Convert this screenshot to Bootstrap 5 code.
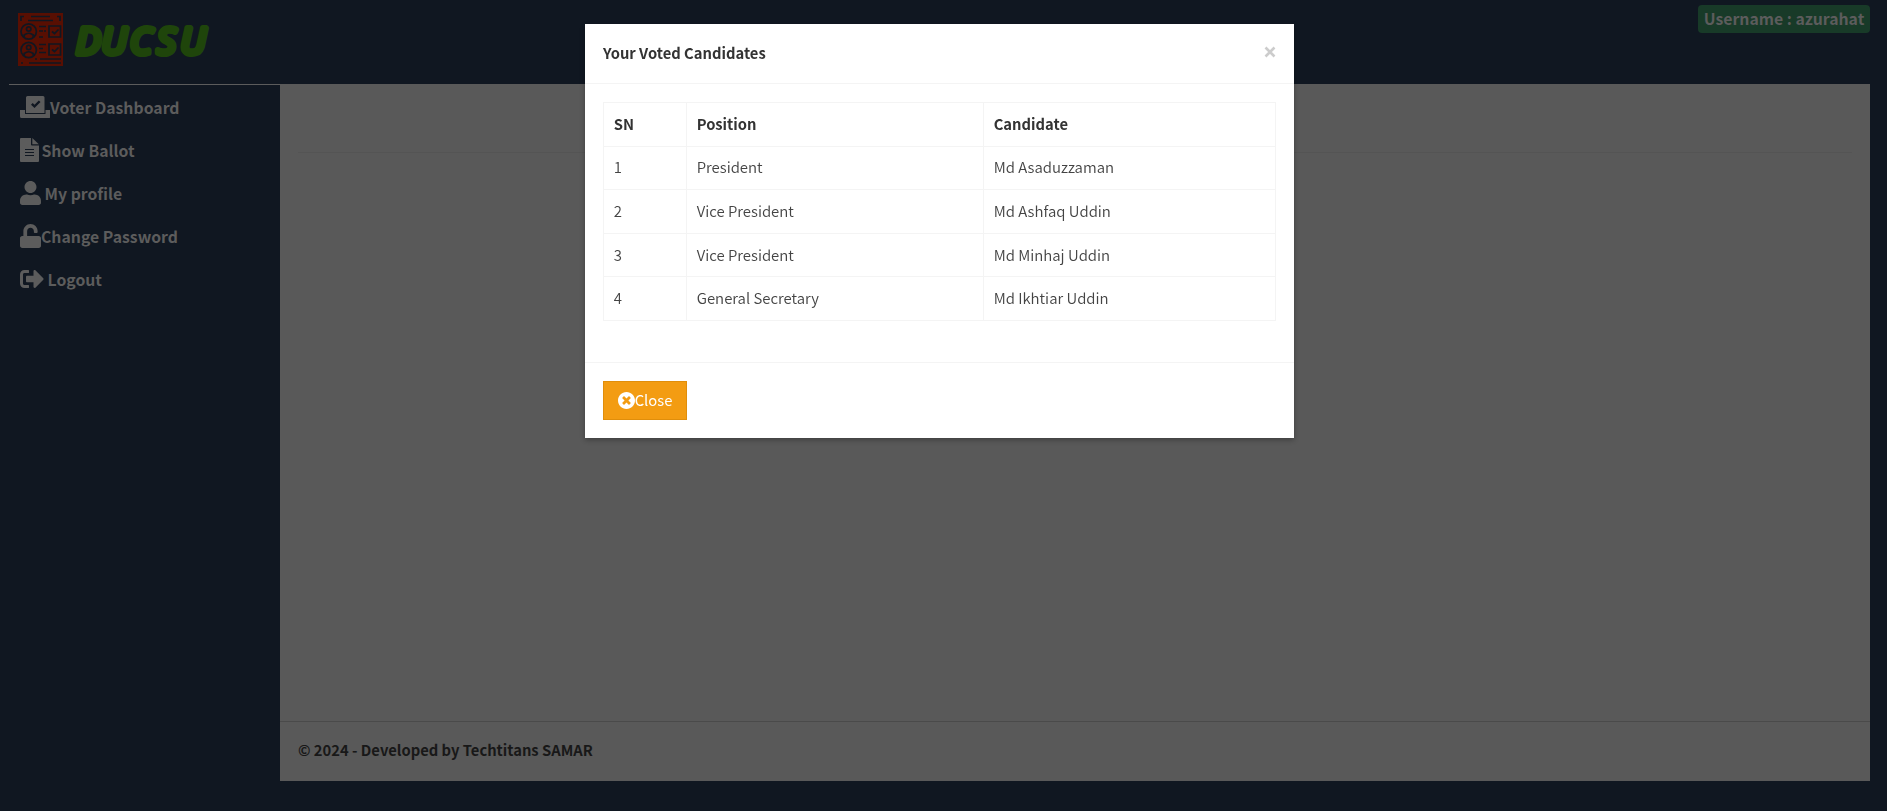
<!DOCTYPE html>
<html lang="en">
<head>
<meta charset="utf-8">
<meta name="viewport" content="width=device-width, initial-scale=1">
<title>DUCSU - Voter Dashboard</title>
<link href="https://cdn.jsdelivr.net/npm/bootstrap@5.3.0/dist/css/bootstrap.min.css" rel="stylesheet">
<style>
body{background:#101721;font-family:"Noto Sans CJK SC","Noto Sans",sans-serif;font-size:14.75px;line-height:24px;color:#333;height:811px;overflow:hidden}
.site-header{height:84px}
.brand{padding:13px 0 0 18px}
.user-tag{background:#183a28;color:#5c5c5c;font-size:15.8px;font-weight:700;height:28px;line-height:27px;width:172px;border-radius:4px;margin:5px 17px 0 0;white-space:nowrap}
.page-row{height:697px;padding-right:17px}
.side{width:280px}
.side ul{margin-left:9px;border-top:1px solid #5c5c5c;padding:1px 0 0 11px}
.side a{height:43px;color:#5c5c5c;font-weight:700;font-size:15.8px;text-decoration:none;white-space:nowrap}
.side svg{fill:#5c5c5c;flex:none}
.side .lift{margin-top:-2px}
.main-pane{background:#595959}
.main-pane .rule{margin:68px 18px 0;border-top:1px solid #545454}
.foot{height:60px;border-top:1px solid #4a4a4a;padding:16px 18px;color:#181818;font-weight:700}
.modal-dialog{width:709px;max-width:709px;margin:24px 0 0 585px}
.modal-content{border:0;border-radius:0;height:414px;box-shadow:0 2px 5px rgba(0,0,0,.3);color:#333}
.modal-header{height:60px;padding:0 18px;border-bottom:1px solid #f4f4f4;border-radius:0}
.modal-title{font-size:14.75px;font-weight:700;line-height:24px;margin-top:-2px}
.modal-body{padding:18px}
.modal-footer{height:76px;padding:0 18px;border-top:1px solid #f4f4f4;border-radius:0}
.modal-footer>*{margin:0}
.vote-table{width:673px;table-layout:fixed;border-collapse:collapse;font-weight:350;color:#333;border-color:#f4f4f4}
.vote-table th,.vote-table td{border:1px solid #f4f4f4;padding:0 9.7px;height:43.6px;line-height:24px;vertical-align:middle}
.vote-table td{padding-bottom:1px;font-size:14.95px;color:#444}
.vote-table th{font-weight:700}
.x-btn{background:none;border:0;padding:0;width:12px;height:12px;line-height:0;margin-top:-3px}
.btn-shut{background:#f39c12;border:1px solid #e08e0b;border-radius:0;color:#fff;width:84px;height:39px;padding:0 0 1px;font-size:14.8px}
.btn-shut:hover{background:#e08e0b;color:#fff}
</style>
</head>
<body>
<header class="site-header d-flex justify-content-between align-items-start">
  <div class="brand d-flex">
    <svg width="45" height="53" viewBox="0 0 45 53" fill="none" stroke="#101721" stroke-width="1.7">
      <path fill="#580f02" stroke="none" d="M0 0h45v53H0z"/>
      <path d="M3 8V3.500h3M42 8V3.500h-3M13 3.500h19M10 7.500h25"/>
      <circle cx="10.700" cy="18.500" r="7.700"/><circle cx="10.700" cy="16" r="2.200"/><path d="M6.200 24v-2q4.500-3.500 9 0v2"/>
      <circle cx="10.700" cy="37" r="7.700"/><circle cx="10.700" cy="34.500" r="2.200"/><path d="M6.200 42.500v-2q4.500-3.500 9 0v2"/>
      <path d="M31 13h11.500v11H31zM31 31h11.500v11H31zM34 18.500l2.500 2 4-4M34 36.500l2.500 2 4-4"/>
      <path d="M21 13.500h7M21 18h4M26 18h2M21 24h4M21 31.500h7M21 35.500h4M21 39.500h7M17 46h2M22 46h21M3 50h2M11 50h32"/>
    </svg>
    <svg width="160" height="60" viewBox="0 0 160 60">
      <text x="13 38.500 67 94 117.500" y="40.500" font-family="Open Sans" font-style="italic" font-weight="400" font-size="37" fill="#1f450b" stroke="#1f450b" stroke-width="6" stroke-linejoin="round" stroke-linecap="round">DUCSU</text>
    </svg>
  </div>
  <div class="user-tag text-center">Username : azurahat</div>
</header>
<div class="page-row d-flex">
  <nav class="side">
    <ul class="list-unstyled mb-0">
      <li><a href="#" class="d-flex align-items-center"><svg class="lift" width="30" height="24" viewBox="0 0 30 24"><path fill-rule="evenodd" d="M7.500 1h15.500q1.500 0 1.500 1.500V18H6V2.500Q6 1 7.500 1zM11 9.800l3.500 3.300 6-6-1.700-1.600-4.300 4.300-1.800-1.700z"/><path d="M0 15h5v4h20.500v-4H30.500v6.500q0 1.500-1.500 1.500H1.500Q0 23 0 21.500z"/></svg>Voter Dashboard</a></li>
      <li><a href="#" class="d-flex align-items-center"><svg class="lift" width="21.500" height="24" viewBox="0 0 21.500 24"><path fill-rule="evenodd" d="M1 0h10v6.500q0 1 1 1h7V23q0 1-1 1H1q-1 0-1-1V1q0-1 1-1zM5 11v1h9v-1zm0 3v1h9v-1zm0 3v1h9v-1z"/><path d="M12.300 0l6.500 6.300h-6.500z"/></svg>Show Ballot</a></li>
      <li><a href="#" class="d-flex align-items-center"><svg class="lift" width="24.500" height="24" viewBox="0 0 523 512"><path d="M224 256c70.700 0 128-57.300 128-128S294.700 0 224 0 96 57.300 96 128s57.300 128 128 128zm89.600 32h-16.700c-22.200 10.200-46.900 16-72.900 16s-50.600-5.800-72.900-16h-16.700C60.200 288 0 348.200 0 422.400V464c0 26.500 21.500 48 48 48h352c26.500 0 48-21.500 48-48v-41.600c0-74.200-60.200-134.400-134.400-134.400z"/></svg>My profile</a></li>
      <li><a href="#" class="d-flex align-items-center"><svg class="lift" width="21" height="24" viewBox="0 0 448 512"><path d="M400 256H152V152.900c0-39.600 31.700-72.500 71.300-72.900 40-.4 72.700 32.100 72.700 72v16c0 13.300 10.700 24 24 24h32c13.300 0 24-10.700 24-24v-16C376 68 307.500-.3 223.500 0 139.500.3 72 69.500 72 153.500V256H48c-26.500 0-48 21.500-48 48v160c0 26.500 21.500 48 48 48h352c26.500 0 48-21.500 48-48V304c0-26.500-21.500-48-48-48z"/></svg>Change Password</a></li>
      <li><a href="#" class="d-flex align-items-center"><svg class="lift" width="27.500" height="24" viewBox="0 0 587 512"><path d="M497 273L329 441c-15 15-41 4.500-41-17v-96H152c-13.300 0-24-10.700-24-24v-96c0-13.300 10.700-24 24-24h136V88c0-21.400 25.900-32 41-17l168 168c9.300 9.400 9.300 24.600 0 34zM192 436v-40c0-6.600-5.400-12-12-12H96c-17.700 0-32-14.300-32-32V160c0-17.700 14.300-32 32-32h84c6.600 0 12-5.400 12-12V76c0-6.600-5.400-12-12-12H96c-53 0-96 43-96 96v192c0 53 43 96 96 96h84c6.600 0 12-5.400 12-12z"/></svg>Logout</a></li>
    </ul>
  </nav>
  <main class="main-pane flex-grow-1 d-flex flex-column">
    <div class="rule"></div>
    <footer class="foot mt-auto">© 2024 - Developed by Techtitans SAMAR</footer>
  </main>
</div>

<div class="modal d-block" tabindex="-1" role="dialog" aria-label="Your Voted Candidates">
  <div class="modal-dialog">
    <div class="modal-content">
      <div class="modal-header d-flex align-items-center justify-content-between">
        <h4 class="modal-title">Your Voted Candidates</h4>
        <button class="x-btn" type="button" aria-label="Close"><svg width="12" height="12" viewBox="0 0 12 12" stroke="#ccc" stroke-width="2.600"><path d="M1.500 1.500l9 9M10.500 1.500l-9 9"/></svg></button>
      </div>
      <div class="modal-body">
        <table class="vote-table">
          <colgroup><col style="width:83px"><col style="width:297px"><col></colgroup>
          <thead><tr><th>SN</th><th>Position</th><th>Candidate</th></tr></thead>
          <tbody>
            <tr><td>1</td><td>President</td><td>Md Asaduzzaman</td></tr>
            <tr><td>2</td><td>Vice President</td><td>Md Ashfaq Uddin</td></tr>
            <tr><td>3</td><td>Vice President</td><td>Md Minhaj Uddin</td></tr>
            <tr><td>4</td><td>General Secretary</td><td>Md Ikhtiar Uddin</td></tr>
          </tbody>
        </table>
      </div>
      <div class="modal-footer d-flex justify-content-start align-items-center">
        <button class="btn btn-shut d-flex align-items-center justify-content-center" type="button"><svg width="17" height="17" viewBox="8 8 496 496" fill="#fff"><path d="M256 8C119 8 8 119 8 256s111 248 248 248 248-111 248-248S393 8 256 8zm121.600 313.100c4.700 4.700 4.700 12.300 0 17L338 377.600c-4.700 4.700-12.300 4.700-17 0L256 312l-65.100 65.600c-4.700 4.700-12.300 4.700-17 0L134.400 338c-4.700-4.700-4.700-12.300 0-17l65.600-65-65.600-65.100c-4.700-4.700-4.700-12.300 0-17l39.600-39.600c4.700-4.700 12.300-4.700 17 0l65 65.700 65.100-65.600c4.700-4.700 12.300-4.700 17 0l39.600 39.600c4.700 4.700 4.700 12.300 0 17L312 256l65.600 65.100z"/></svg>Close</button>
      </div>
    </div>
  </div>
</div>
<script src="https://cdn.jsdelivr.net/npm/bootstrap@5.3.0/dist/js/bootstrap.bundle.min.js"></script>
</body>
</html>
